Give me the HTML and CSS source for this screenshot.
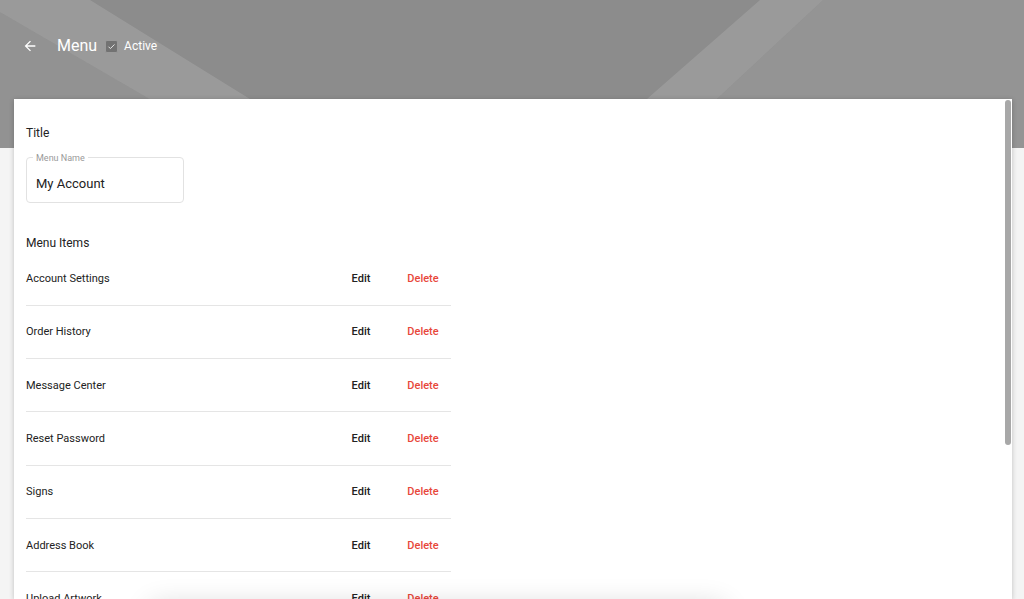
FILE: index.html
```html
<!DOCTYPE html>
<html lang="en">
<head>
  <meta charset="UTF-8" />
  <meta name="viewport" content="width=device-width, initial-scale=1.0" />
  <title>Menu</title>
  <link rel="stylesheet" href="styles.css">
</head>
<body>
  <div class="hero">
    <svg class="hero-bg" width="1024" height="148" viewBox="0 0 1024 148" preserveAspectRatio="none">
      <polygon points="0,0 90,0 329,148 234,148 0,12" fill="#ffffff" fill-opacity="0.13" />
      <polygon points="0,12 234,148 0,148" fill="#ffffff" fill-opacity="0.06" />
      <polygon points="760,0 823,0 664,148 591,148" fill="#ffffff" fill-opacity="0.13" />
      <polygon points="823,0 1024,0 1024,148 664,148" fill="#ffffff" fill-opacity="0.07" />
    </svg>
    <div class="toolbar">
      <svg class="back" width="16" height="16" viewBox="0 0 24 24">
        <path d="M20 11H7.83l5.59-5.59L12 4l-8 8 8 8 1.41-1.41L7.83 13H20v-2z" fill="#fff" />
      </svg>
      <span class="page-title">Menu</span>
      <span class="check">
        <svg width="9" height="9" viewBox="0 0 24 24"><path d="M4 12.5l5 5L20 6.5" fill="none" stroke="#e6e6e6" stroke-width="2.6" /></svg>
      </span>
      <span class="active">Active</span>
    </div>
  </div>

  <div class="card">
    <div class="thumb"></div>
    <h3 class="section">Title</h3>
    <div class="field">
      <span class="field-label">Menu Name</span>
      <span class="field-value">My Account</span>
    </div>

    <h3 class="section items-head">Menu Items</h3>
    <div class="items">
      <div class="item"><span class="name">Account Settings</span><button class="edit">Edit</button><button class="delete">Delete</button></div>
      <div class="item"><span class="name">Order History</span><button class="edit">Edit</button><button class="delete">Delete</button></div>
      <div class="item"><span class="name">Message Center</span><button class="edit">Edit</button><button class="delete">Delete</button></div>
      <div class="item"><span class="name">Reset Password</span><button class="edit">Edit</button><button class="delete">Delete</button></div>
      <div class="item"><span class="name">Signs</span><button class="edit">Edit</button><button class="delete">Delete</button></div>
      <div class="item"><span class="name">Address Book</span><button class="edit">Edit</button><button class="delete">Delete</button></div>
      <div class="item"><span class="name">Upload Artwork</span><button class="edit">Edit</button><button class="delete">Delete</button></div>
      <div class="item"><span class="name">Logout</span><button class="edit">Edit</button><button class="delete">Delete</button></div>
    </div>
  </div>

  <div class="bottom-bar"></div>
</body>
</html>
```

FILE: styles.css
```css
body {
  margin: 0;
  background: #f4f4f4;
  font-family: Roboto, "Liberation Sans", Arial, sans-serif;
  color: #222;
  overflow: hidden;
  height: 599px;
}
.hero {
  position: relative;
  height: 148px;
  background: #8c8c8c;
}
.hero-bg {
  position: absolute;
  top: 0;
  left: 0;
  width: 100%;
  height: 100%;
}
.toolbar {
  position: relative;
  height: 92px;
  display: flex;
  align-items: center;
  padding-left: 22px;
  color: #fff;
}
.back {
  margin-right: 19px;
}
.page-title {
  font-size: 16px;
  margin-right: 8px;
  margin-top: -2px;
}
.check {
  width: 11px;
  height: 11px;
  border: 1px solid #9a9a9a;
  background: #727272;
  border-radius: 2px;
  display: flex;
  align-items: center;
  justify-content: center;
  margin-right: 6px;
}
.active {
  font-size: 12px;
}
.card {
  position: relative;
  margin: -49px 12px 0 14px;
  height: 500px;
  background: #fff;
  box-shadow: 0 1px 5px rgba(0, 0, 0, 0.22);
  padding: 0 12px;
  overflow: hidden;
}
.thumb {
  position: absolute;
  top: 1px;
  right: 1px;
  width: 6px;
  height: 345px;
  border-radius: 3px;
  background: #a8a8a8;
}
.section {
  margin: 0;
  font-size: 12px;
  font-weight: 400;
  color: #222;
  padding-top: 27px;
  line-height: 14px;
}
.field {
  position: relative;
  width: 158px;
  height: 46px;
  margin-top: 17px;
  border: 1px solid #e2e2e2;
  border-radius: 4px;
  display: flex;
  align-items: center;
  padding: 0 9px;
  box-sizing: border-box;
}
.field-label {
  position: absolute;
  top: -5px;
  left: 6px;
  padding: 0 3px;
  background: #fff;
  font-size: 9px;
  color: #9a9a9a;
  line-height: 11px;
}
.field-value {
  font-size: 13px;
  margin-top: 6px;
}
.items-head {
  padding-top: 33px;
}
.items {
  width: 425px;
  margin-top: 2.5px;
}
.item {
  display: flex;
  align-items: center;
  height: 53.33px;
  box-sizing: border-box;
  border-bottom: 1px solid #e5e5e5;
}
.name {
  flex: 1;
  font-size: 11px;
}
.item button {
  width: 56px;
  border: none;
  background: none;
  padding: 0;
  font-family: inherit;
  font-size: 11px;
  font-weight: 500;
  cursor: pointer;
}
.edit {
  color: #222;
  margin-right: 6px;
}
.delete {
  color: #e8473b;
}
.bottom-bar {
  position: fixed;
  left: 150px;
  width: 575px;
  top: 605px;
  height: 50px;
  background: #fff;
  border-radius: 8px;
  box-shadow: 0 0 28px rgba(0, 0, 0, 0.16);
}
```
